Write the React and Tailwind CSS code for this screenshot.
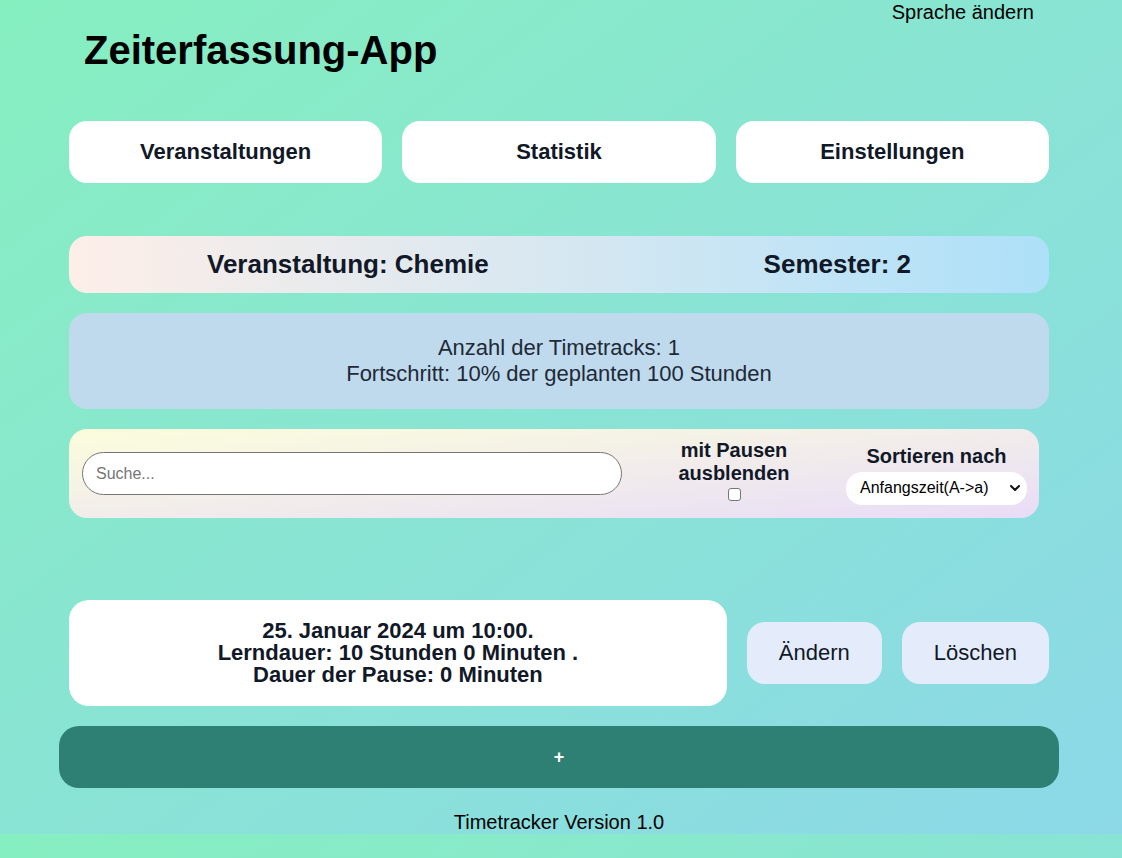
import React from "react";

export default function App() {
  return (
    <div className="min-h-[858px] w-full bg-[linear-gradient(to_bottom_right,#86efc0,#8cd8e8)] bg-[length:100%_834px] bg-repeat font-['Liberation_Sans',Arial,sans-serif]">
      <div className="h-[834px] w-full">
        <div className="flex justify-end pr-[88px] pt-[1px]">
          <span className="text-[20px] leading-[23px] text-black">Sprache ändern</span>
        </div>
        <h1 className="ml-[84px] mt-[3px] text-[40px] font-bold leading-[46px] text-black">Zeiterfassung-App</h1>

        <div className="ml-[59px] w-[1000px]">
          <div className="mt-[48px] flex gap-[20px] px-[10px]">
            {["Veranstaltungen", "Statistik", "Einstellungen"].map((t) => (
              <div key={t} className="flex h-[62px] flex-1 items-center justify-center rounded-[18px] bg-white pb-[1px] text-[22px] font-bold text-[#111827]">
                {t}
              </div>
            ))}
          </div>

          <div className="mx-[10px] mt-[53px] flex h-[57px] items-center justify-between rounded-[18px] bg-gradient-to-r from-[#fdeee8] to-[#ade0f9] px-[138px] text-[26px] font-bold text-[#111827]">
            <span>Veranstaltung: Chemie</span>
            <span>Semester: 2</span>
          </div>

          <div className="mx-[10px] mt-[20px] flex h-[96px] flex-col items-center justify-center rounded-[18px] bg-[#bedaec] text-[22px] leading-[26px] text-[#1f2937]">
            <div>Anzahl der Timetracks: 1</div>
            <div>Fortschritt: 10% der geplanten 100 Stunden</div>
          </div>

          <div className="ml-[10px] mt-[20px] flex h-[89px] w-[970px] items-center rounded-[18px] bg-gradient-to-br from-[#fcfddc] to-[#e8dcf7] pl-[13px] pr-[12px]">
            <input
              type="text"
              placeholder="Suche..."
              className="h-[43px] w-[540px] rounded-[22px] border border-[#767676] bg-white px-[13px] text-[16px] text-black placeholder:text-[#757575] focus:outline-none"
            />
            <div className="mb-[7px] flex flex-1 flex-col items-center text-[20px] font-bold leading-[23px] text-[#111827]">
              <span>mit Pausen</span>
              <span>ausblenden</span>
              <span className="mt-[3px] block h-[13px] w-[13px] rounded-[3px] border border-[#767676] bg-white"></span>
            </div>
            <div className="flex w-[181px] flex-col items-center pt-[2px]">
              <span className="text-[20px] font-bold leading-[23px] text-[#111827]">Sortieren nach</span>
              <div className="mt-[4px] flex h-[33px] w-[181px] items-center justify-between rounded-[16px] bg-white pl-[14px] pr-[6px] text-[16px] text-black">
                <span>Anfangszeit(A-&gt;a)</span>
                <svg width="12" height="12" viewBox="0 0 12 12">
                  <path d="M2 4 L6 8 L10 4" fill="none" stroke="#111" strokeWidth="2" strokeLinecap="round" strokeLinejoin="round" />
                </svg>
              </div>
            </div>
          </div>

          <div className="mt-[82px] flex items-center gap-[20px] px-[10px]">
            <div className="flex h-[106px] w-[658px] flex-col items-center justify-center rounded-[20px] bg-white text-[22px] font-bold leading-[22px] text-[#111827]">
              <div>25. Januar 2024 um 10:00.</div>
              <div>Lerndauer: 10 Stunden 0 Minuten .</div>
              <div>Dauer der Pause: 0 Minuten</div>
            </div>
            <div className="flex h-[62px] items-center rounded-[18px] bg-[#e4ecfb] px-[32px] pb-[1px] text-[22px] text-[#111827]">Ändern</div>
            <div className="flex h-[62px] items-center rounded-[18px] bg-[#e4ecfb] px-[32px] pb-[1px] text-[22px] text-[#111827]">Löschen</div>
          </div>

          <div className="mt-[20px] flex h-[62px] items-center justify-center rounded-[20px] bg-[#2f8074] text-[18px] font-bold text-white">
            +
          </div>

          <div className="mt-[23px] text-center text-[20px] leading-[23px] text-black">Timetracker Version 1.0</div>
        </div>
      </div>
    </div>
  );
}
